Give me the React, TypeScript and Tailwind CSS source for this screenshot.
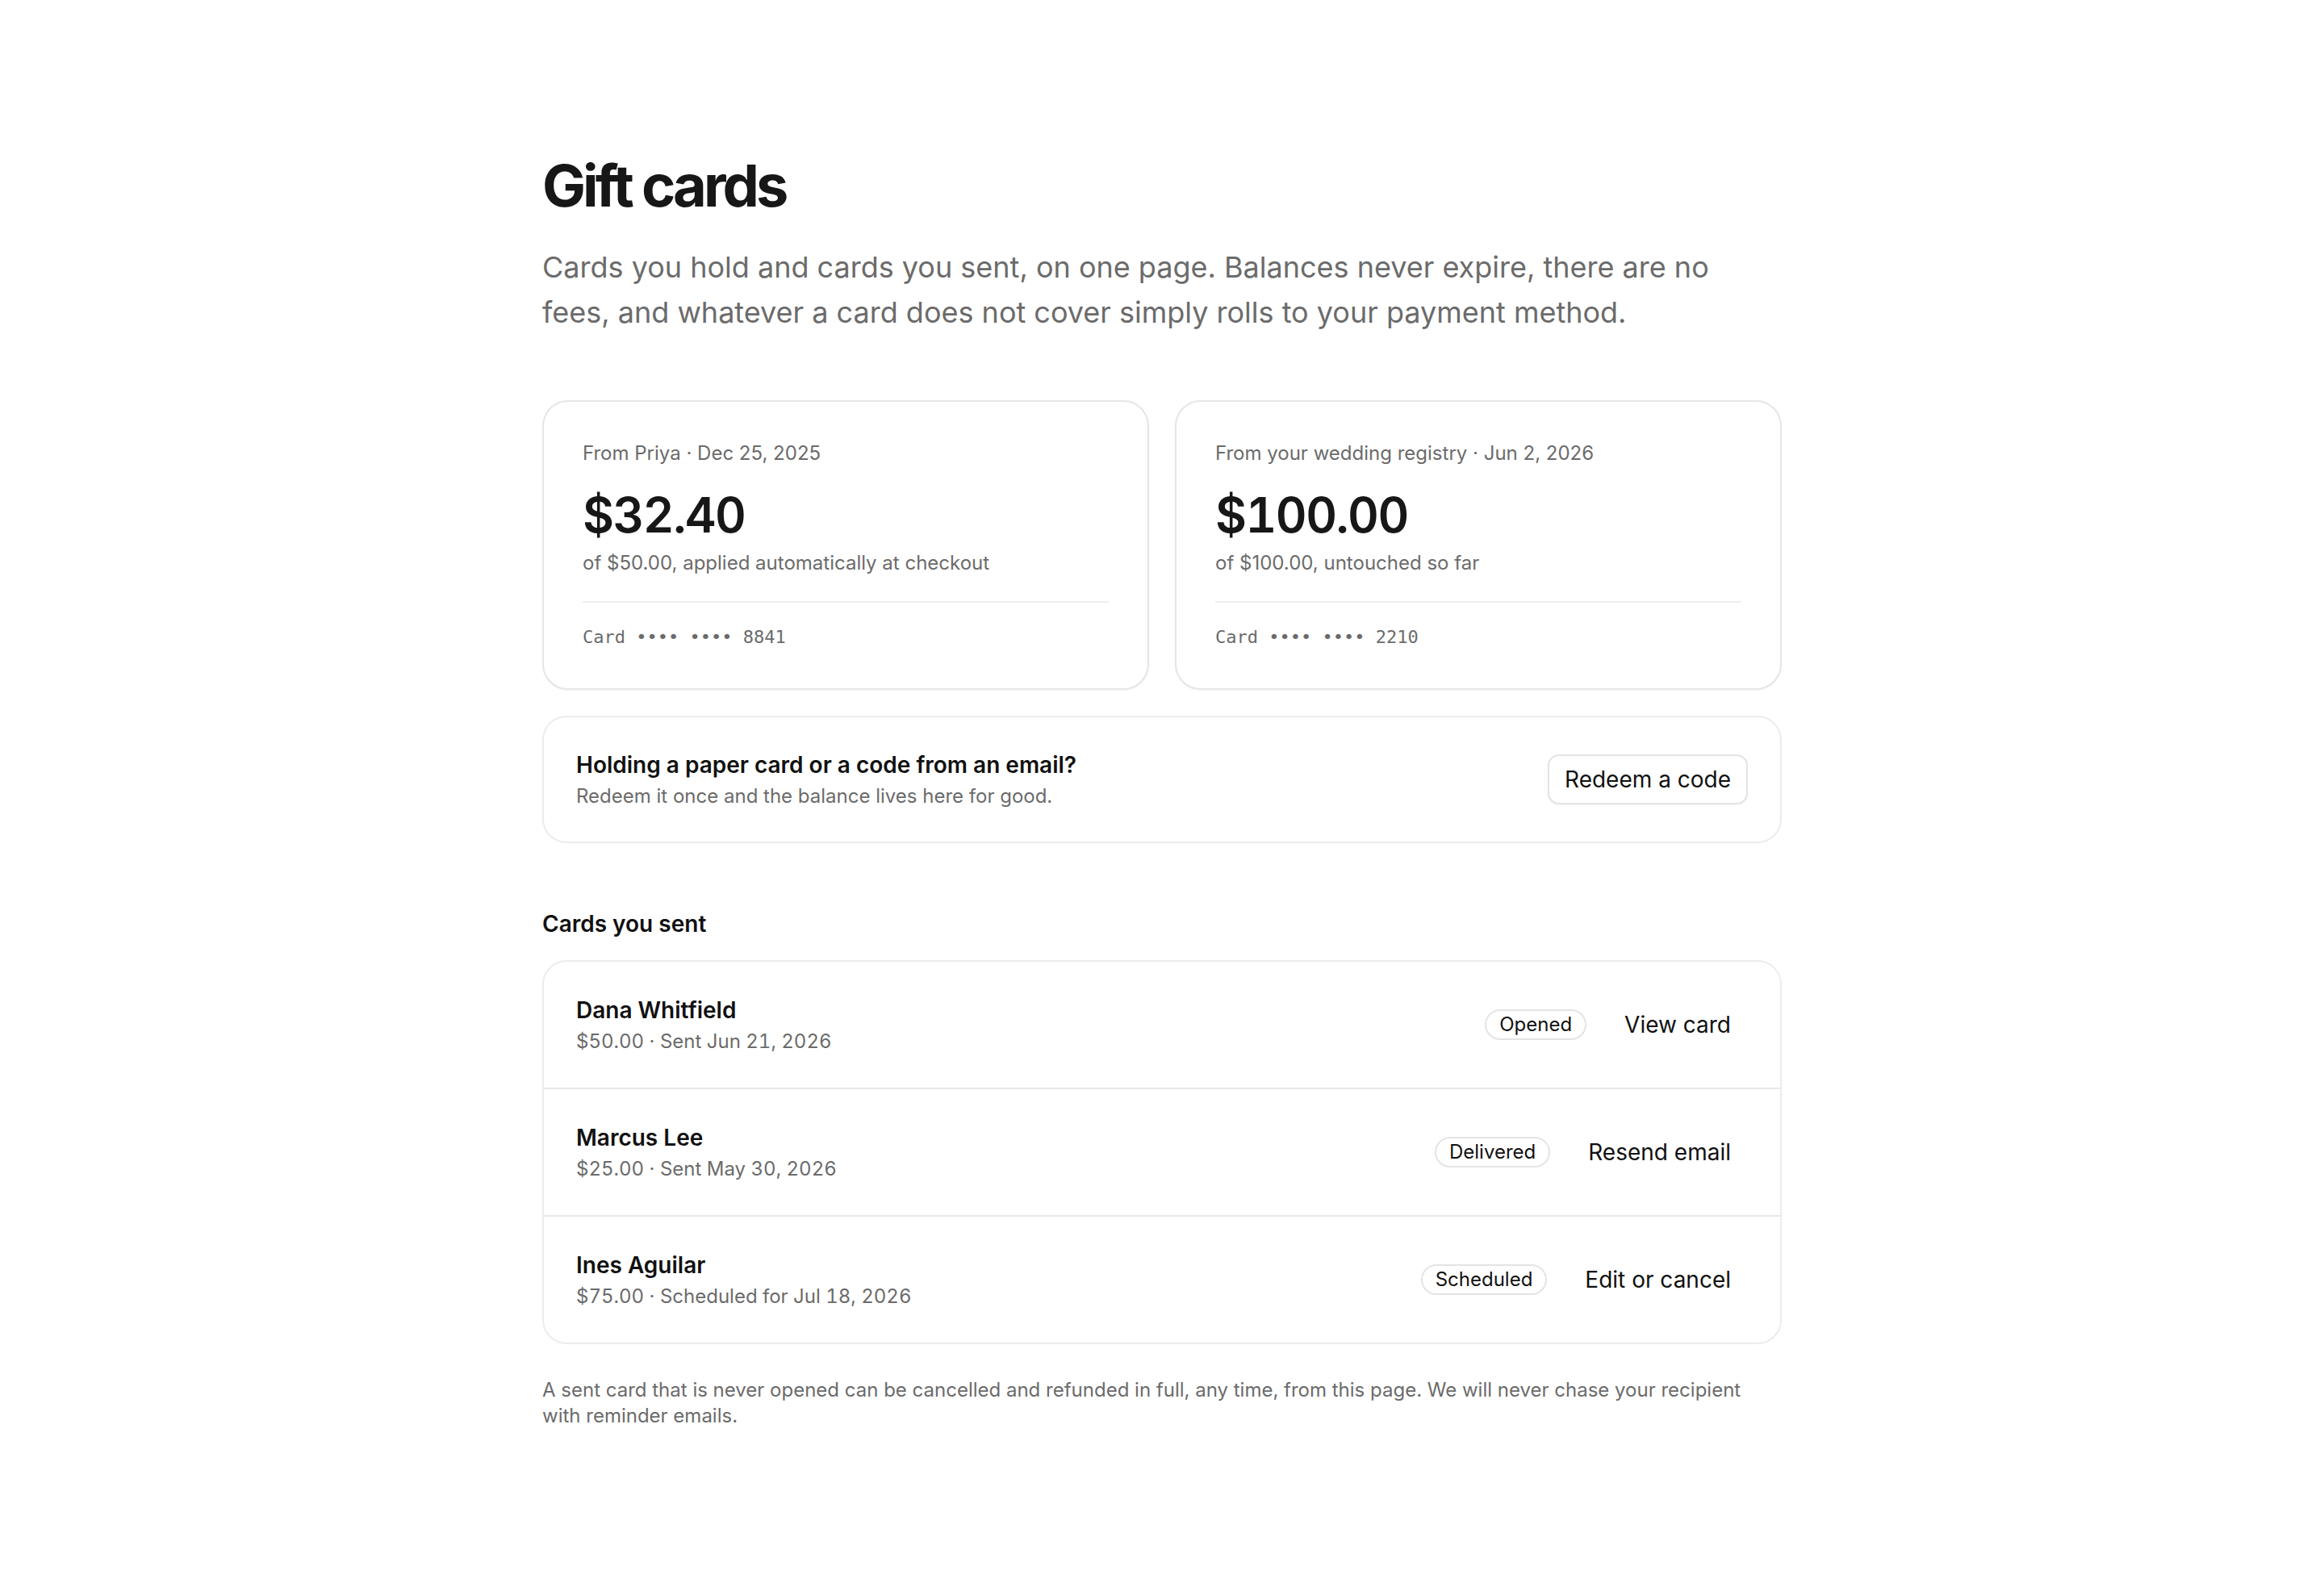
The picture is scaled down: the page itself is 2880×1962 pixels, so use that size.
import React from "react";

type HeldCard = {
  source: string;
  balance: string;
  note: string;
  last4: string;
};

type SentCard = {
  name: string;
  meta: string;
  status: string;
  action: string;
};

const held: HeldCard[] = [
  {
    source: "From Priya · Dec 25, 2025",
    balance: "$32.40",
    note: "of $50.00, applied automatically at checkout",
    last4: "8841",
  },
  {
    source: "From your wedding registry · Jun 2, 2026",
    balance: "$100.00",
    note: "of $100.00, untouched so far",
    last4: "2210",
  },
];

const sent: SentCard[] = [
  { name: "Dana Whitfield", meta: "$50.00 · Sent Jun 21, 2026", status: "Opened", action: "View card" },
  { name: "Marcus Lee", meta: "$25.00 · Sent May 30, 2026", status: "Delivered", action: "Resend email" },
  { name: "Ines Aguilar", meta: "$75.00 · Scheduled for Jul 18, 2026", status: "Scheduled", action: "Edit or cancel" },
];

function BalanceCard({ card }: { card: HeldCard }) {
  return (
    <div className="rounded-[32px] border-2 border-[#e6e6e6] bg-white px-[48px] pt-[48px] pb-[47px] shadow-[0_1px_2px_rgba(0,0,0,0.05)]">
      <div className="text-[24px] leading-[32px] text-[#6b6b6b]">{card.source}</div>
      <div className="mt-[28px] text-[60px] leading-[64px] font-semibold tracking-[-0.025em] tabular-nums text-[#171717]">
        {card.balance}
      </div>
      <div className="mt-[12px] text-[24px] leading-[32px] text-[#6b6b6b]">{card.note}</div>
      <div className="mt-[31px] border-t-2 border-[#ededed] pt-[27px]">
        <div className="font-['DejaVu_Sans_Mono',monospace] text-[22px] leading-[32px] text-[#6b6b6b]">
          Card •••• •••• {card.last4}
        </div>
      </div>
    </div>
  );
}

export default function App() {
  return (
    <div className="min-h-screen bg-white font-['Inter',sans-serif] text-[#171717]">
      <main className="mx-auto w-[1536px] pt-[190px] pb-[160px]">
        <h1 className="text-[72px] leading-[79px] font-bold tracking-[-0.055em] text-[#171717]">Gift cards</h1>
        <p className="mt-[34px] max-w-[1480px] text-[36px] leading-[56px] text-[#6b6b6b]">
          Cards you hold and cards you sent, on one page. Balances never expire, there are no fees, and
          whatever a card does not cover simply rolls to your payment method.
        </p>

        <div className="mt-[81px] grid grid-cols-2 gap-[32px]">
          {held.map((c) => (
            <BalanceCard key={c.last4} card={c} />
          ))}
        </div>

        <div className="mt-[32px] flex items-center justify-between rounded-[30px] border-2 border-[#ececec] bg-white px-[40px] py-[40px]">
          <div>
            <div className="text-[28px] leading-[38px] font-semibold text-[#111111]">
              Holding a paper card or a code from an email?
            </div>
            <div className="mt-[4px] text-[24px] leading-[32px] text-[#6b6b6b]">
              Redeem it once and the balance lives here for good.
            </div>
          </div>
          <button className="h-[62px] rounded-[14px] border-2 border-[#e4e4e4] bg-white px-[19px] text-[28px] leading-[36px] text-[#111111] shadow-[0_1px_2px_rgba(0,0,0,0.06)]">
            Redeem a code
          </button>
        </div>

        <h2 className="mt-[81px] text-[28px] leading-[38px] font-semibold text-[#111111]">Cards you sent</h2>

        <div className="mt-[26px] overflow-hidden rounded-[30px] border-2 border-[#ececec] bg-white">
          {sent.map((s, i) => (
            <div
              key={s.name}
              className={`flex items-center justify-between px-[40px] py-[41px] ${
                i > 0 ? "border-t-2 border-[#e8e8e8]" : ""
              }`}
            >
              <div>
                <div className="text-[28px] leading-[38px] font-semibold text-[#111111]">{s.name}</div>
                <div className="mt-[4px] text-[24px] leading-[32px] tabular-nums text-[#6b6b6b]">{s.meta}</div>
              </div>
              <div className="flex items-center gap-[26px]">
                <span className="rounded-full border-2 border-[#e4e4e4] px-[16px] text-[24px] leading-[34px] text-[#111111]">
                  {s.status}
                </span>
                <button className="px-[21px] text-[28px] leading-[36px] text-[#111111]">{s.action}</button>
              </div>
            </div>
          ))}
        </div>

        <p className="mt-[41px] text-[24px] leading-[32px] text-[#6b6b6b]">
          A sent card that is never opened can be cancelled and refunded in full, any time, from this page. We
          will never chase your recipient with reminder emails.
        </p>
      </main>
    </div>
  );
}
